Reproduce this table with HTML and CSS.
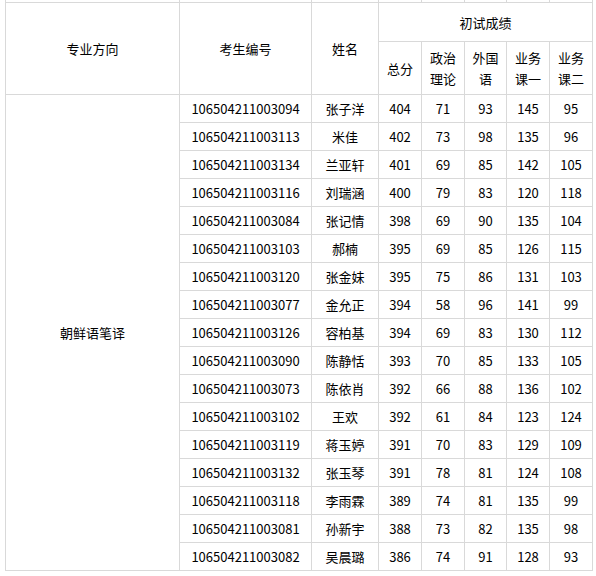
FILE: index.html
```html
<!DOCTYPE html>
<html lang="zh">
<head>
<meta charset="utf-8">
<link rel="stylesheet" href="styles.css">
</head>
<body>
<div class="wrap">
<table class="score">
<colgroup>
<col class="c1"><col class="c2"><col class="c3"><col class="c4"><col class="c5"><col class="c6"><col class="c7"><col class="c8"><col class="c9">
</colgroup>
<tr class="prev"><td></td><td></td><td></td><td></td><td></td><td></td><td></td><td></td><td></td></tr>
<tr class="h1"><th rowspan="2">专业方向</th><th rowspan="2">考生编号</th><th rowspan="2">姓名</th><th colspan="6">初试成绩</th></tr>
<tr class="h2"><th>总分</th><th>政治<br>理论</th><th>外国<br>语</th><th>业务<br>课一</th><th>业务<br>课二</th></tr>
<tr><td rowspan="17">朝鲜语笔译</td><td>106504211003094</td><td>张子洋</td><td>404</td><td>71</td><td>93</td><td>145</td><td>95</td></tr>
<tr><td>106504211003113</td><td>米佳</td><td>402</td><td>73</td><td>98</td><td>135</td><td>96</td></tr>
<tr><td>106504211003134</td><td>兰亚轩</td><td>401</td><td>69</td><td>85</td><td>142</td><td>105</td></tr>
<tr><td>106504211003116</td><td>刘瑞涵</td><td>400</td><td>79</td><td>83</td><td>120</td><td>118</td></tr>
<tr><td>106504211003084</td><td>张记情</td><td>398</td><td>69</td><td>90</td><td>135</td><td>104</td></tr>
<tr><td>106504211003103</td><td>郝楠</td><td>395</td><td>69</td><td>85</td><td>126</td><td>115</td></tr>
<tr><td>106504211003120</td><td>张金妹</td><td>395</td><td>75</td><td>86</td><td>131</td><td>103</td></tr>
<tr><td>106504211003077</td><td>金允正</td><td>394</td><td>58</td><td>96</td><td>141</td><td>99</td></tr>
<tr><td>106504211003126</td><td>容柏基</td><td>394</td><td>69</td><td>83</td><td>130</td><td>112</td></tr>
<tr><td>106504211003090</td><td>陈静恬</td><td>393</td><td>70</td><td>85</td><td>133</td><td>105</td></tr>
<tr><td>106504211003073</td><td>陈依肖</td><td>392</td><td>66</td><td>88</td><td>136</td><td>102</td></tr>
<tr><td>106504211003102</td><td>王欢</td><td>392</td><td>61</td><td>84</td><td>123</td><td>124</td></tr>
<tr><td>106504211003119</td><td>蒋玉婷</td><td>391</td><td>70</td><td>83</td><td>129</td><td>109</td></tr>
<tr><td>106504211003132</td><td>张玉琴</td><td>391</td><td>78</td><td>81</td><td>124</td><td>108</td></tr>
<tr><td>106504211003118</td><td>李雨霖</td><td>389</td><td>74</td><td>81</td><td>135</td><td>99</td></tr>
<tr><td>106504211003081</td><td>孙新宇</td><td>388</td><td>73</td><td>82</td><td>135</td><td>98</td></tr>
<tr><td>106504211003082</td><td>吴晨璐</td><td>386</td><td>74</td><td>91</td><td>128</td><td>93</td></tr>
</table>
</div>
</body>
</html>
```
FILE: styles.css
```css
html, body {
  margin: 0;
  padding: 0;
  background: #fff;
}
.wrap {
  height: 576px;
  overflow: hidden;
}
.score {
  border-collapse: collapse;
  table-layout: fixed;
  width: 588px;
  margin: -26px 0 0 5px;
  font-family: "Noto Sans CJK SC", "Noto Sans", sans-serif;
  font-size: 13px;
  color: #000;
}
.score td, .score th {
  border: 1px solid #d9d9d9;
  padding: 0;
  text-align: center;
  vertical-align: middle;
  font-weight: normal;
  line-height: 21px;
  height: 27px;
}
.c1 { width: 174px; }
.c2 { width: 132px; }
.c3 { width: 67px; }
.c4 { width: 43px; }
.c5 { width: 43px; }
.c6 { width: 42px; }
.c7 { width: 43px; }
.c8 { width: 43px; }
.c9 { width: 0; }
.score .h1 th { height: 38px; }
.score .h2 th { height: 52px; }
```
